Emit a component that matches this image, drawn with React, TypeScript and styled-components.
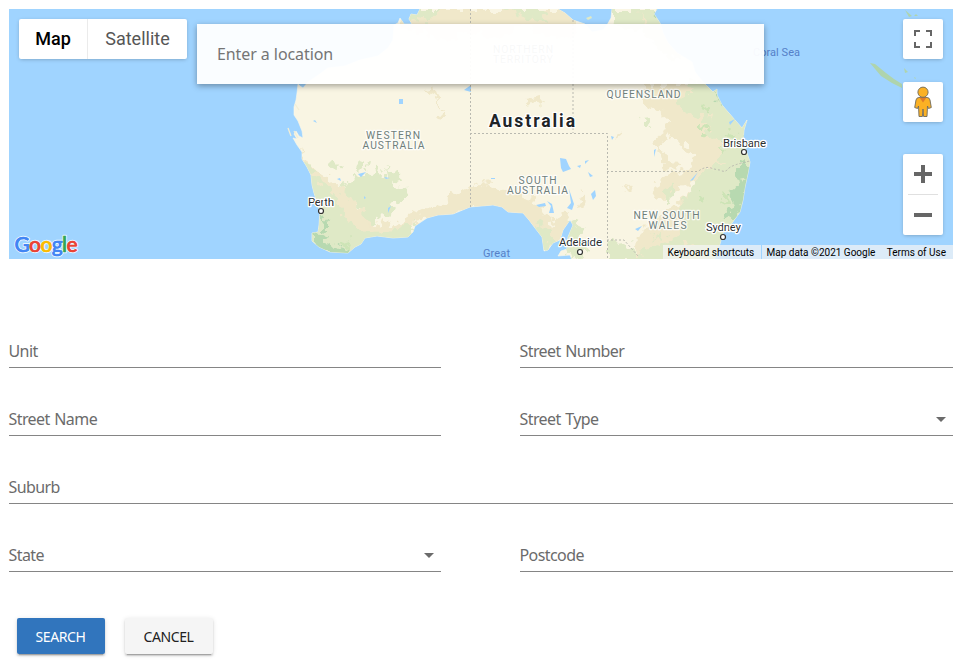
import React from "react";
import styled, { createGlobalStyle } from "styled-components";

const GlobalStyle = createGlobalStyle`
  * { box-sizing: border-box; }
  html, body { margin: 0; background: #fff; }
`;

const formFont = `"Noto Sans", "Open Sans", sans-serif`;

const Page = styled.main`
  width: 965px;
  height: 665px;
  padding: 9px 12px 0 9px;
  overflow: hidden;
  font-family: ${formFont};
`;

const MapPanel = styled.section`
  position: relative;
  height: 250px;
  overflow: hidden;
  background: #a0d4ff;
  font-family: Roboto, sans-serif;
`;

const MapCanvas = styled.svg`
  display: block;
  width: 944px;
  height: 250px;
`;

const MapTypes = styled.div`
  position: absolute;
  left: 10px;
  top: 10px;
  display: flex;
  height: 40px;
  border-radius: 2px;
  background: #fff;
  box-shadow: 0 1px 4px -1px rgba(0, 0, 0, 0.3);
`;

const MapType = styled.button<{ $active?: boolean; $width: number }>`
  width: ${(p) => p.$width}px;
  padding: 0 0 1px;
  border: 0;
  border-left: ${(p) => (p.$active ? "0" : "1px solid #ebebeb")};
  background: none;
  font: ${(p) => (p.$active ? 500 : 400)} 18px Roboto, sans-serif;
  color: ${(p) => (p.$active ? "#000" : "#565656")};
`;

const LocationInput = styled.input`
  position: absolute;
  left: 188px;
  top: 15px;
  width: 567px;
  height: 60px;
  padding: 0 20px;
  border: 0;
  outline: 0;
  background: rgba(255, 255, 255, 0.95);
  box-shadow: 0 2px 6px rgba(0, 0, 0, 0.35);
  font: 16px ${formFont};
  letter-spacing: -0.08px;
  &::placeholder { color: #757575; opacity: 1; }
`;

const Controls = styled.div`
  position: absolute;
  right: 10px;
  top: 10px;
  display: flex;
  flex-direction: column;
`;

const ControlButton = styled.button<{ $after: number }>`
  display: grid;
  place-items: center;
  width: 40px;
  height: 40px;
  margin-bottom: ${(p) => p.$after}px;
  padding: 0;
  border: 0;
  border-radius: 2px;
  background: #fff;
  box-shadow: 0 1px 4px -1px rgba(0, 0, 0, 0.3);
`;

const ZoomGroup = styled.div`
  width: 40px;
  border-radius: 2px;
  background: #fff;
  box-shadow: 0 1px 4px -1px rgba(0, 0, 0, 0.3);
`;

const ZoomButton = styled.button`
  display: grid;
  place-items: center;
  width: 40px;
  height: 40px;
  padding: 0;
  border: 0;
  background: none;
`;

const ZoomDivider = styled.div`
  height: 1px;
  margin: 0 5px;
  background: #e0e0e0;
`;

const Attribution = styled.footer`
  position: absolute;
  right: 0;
  bottom: 0;
  display: flex;
  gap: 1px;
  height: 14px;
  font-size: 10px;
  line-height: 15px;
  color: #000;
  white-space: nowrap;
`;

const Credit = styled.div<{ $width: number }>`
  display: flex;
  justify-content: space-between;
  width: ${(p) => p.$width}px;
  padding: 0 7px 0 4.500px;
  background: rgba(245, 245, 245, 0.7);
`;

const Form = styled.form`
  display: grid;
  grid-template-columns: 432px 433px;
  column-gap: 79px;
  row-gap: 32px;
  margin-top: 73px;
`;

const Field = styled.label<{ $wide?: boolean }>`
  display: flex;
  align-items: center;
  justify-content: space-between;
  grid-column: ${(p) => (p.$wide ? "1 / -1" : "auto")};
  height: 36px;
  padding-right: 7.500px;
  padding-top: 3px;
  border-bottom: 1px solid #858585;
  font-size: 16px;
  letter-spacing: -0.58px;
  word-spacing: 1px;
  text-indent: -0.5px;
  color: #6b6b6b;
`;

const Caret = styled.i`
  border: 5px solid transparent;
  border-top-color: #6b6b6b;
  border-bottom: 0;
`;

const Actions = styled.div`
  display: flex;
  gap: 20px;
  padding: 46px 8px 0;
`;

const ActionButton = styled.button<{ $primary?: boolean }>`
  width: 88px;
  height: 36px;
  padding: 0 1px 0 0;
  border: 0;
  border-radius: 2px;
  background: ${(p) => (p.$primary ? "#3175bd" : "#f5f5f5")};
  color: ${(p) => (p.$primary ? "#fff" : "#212121")};
  box-shadow: 0 3px 1px -2px rgba(0, 0, 0, 0.2), 0 2px 2px 0 rgba(0, 0, 0, 0.14),
    0 1px 5px 0 rgba(0, 0, 0, 0.12);
  font: 14px ${formFont};
  letter-spacing: -0.4px;
`;

const coast =
  "M420 9L417 15 411 14 409 19 412 24 404 24 400 18 398 23 394 25 393 40 388 48 378 56 360 60 345 66 328 68 317 76 308 82 303 88 300 86 298 84 297 93 296 100 294 107 294 115 298 121 302 131 303 138 299 136 296 131 294 134 297 139 293 138 297 145 302 152 302 159 307 167 311 175 312 185 314 193 317 202 320 212 319 225 318 232 312 233 312 241 319 247 330 252 348 253 355 247 361 244 365 238 377 236 393 238 408 237 413 232 415 226 427 218 438 215 453 214 470 207 493 205 502 207 508 212 523 213 529 220 535 228 542 237 544 251 548 250 553 243 560 240 563 230 570 220 573 225 568 237 567 249 561 251 558 256 570 255 572 260 714 260 720 244 723 233 732 223 740 212 743 200 745 187 748 173 750 162 747 153 743 142 744 130 747 120 742 128 735 120 728 112 722 105 717 95 717 89 713 92 705 84 703 82 695 72 692 62 677 53 668 43 663 33 660 23 654 14 657 9H612L611 18 607 25 603 30 592 32 585 24 573 20 565 13 558 9Z";

const sand = [
  "M406 9H575V38L540 34 520 24 500 40 470 32 440 44 420 30 400 28Z",
  "M300 150L312 168 332 180 352 198 366 218 384 226 412 222 410 240H312L306 180Z",
  "M404 226L408 216 420 210 445 204 452 196 472 186 482 182 500 190 520 193 540 205 552 224 566 214 572 236 546 252 520 222 470 210Z",
  "M642 84L720 84 730 105 745 120 750 142 750 180 700 178 690 182 675 192 662 198 650 196 664 176 690 168 694 156 682 142 672 140 668 134 658 148 652 140 664 130 668 120 656 110 642 102Z",
  "M708 164L704 182 680 200 664 214 650 224 636 238 634 260 700 260 710 220Z",
  "M422 88L434 87 438 97 431 99Z M436 94L440 96 440 108 437 106Z M441 110L446 116 445 120 440 119Z",
  "M526 98L542 95 544 102 530 106Z M617 131L624 132 618 140Z",
  "M658 144L664 154 668 161 682 162 675 170 661 166Z",
  "M624 186L632 187 630 193Z M578 208L582 192 587 194 586 206Z",
];
const green = [
  "M330 164L334 160 340 166 335 170Z M353 164L368 160 366 168 358 169Z M384 169L398 172 400 180 392 182Z M401 184L408 190 404 196 396 194Z",
  "M340 186L349 183 356 174 362 176 364 170 372 172 376 164 384 176 392 178 396 186 406 190 406 196 396 204 392 213 378 217 370 222 362 218 360 208 350 198 344 192Z",
  "M302 160L312 168 318 182 328 188 342 204 354 222 370 232 388 234 404 224 416 224 414 242H366L350 258H318L306 246 312 230 316 214Z",
  "M404 9H440L430 20 416 18 410 26Z M500 9H540L552 22 530 18Z",
  "M612 9H662L666 34 682 54 672 60 640 30 612 24Z",
  "M690 80L720 84 732 105 746 118 756 166 735 176 718 160 722 148 710 135 700 116 684 110 678 100 686 92 694 92Z",
  "M682 104L692 100 698 108 690 114 680 110Z M641 120L650 119 652 126 646 128Z",
  "M756 158L752 190 745 212 728 234 720 264H634L644 250 664 242 678 234 684 220 678 206 690 192 694 182 702 172 718 164 735 168Z",
  "M536 220L550 229 554 242 544 255 532 230Z M568 218L582 226 584 250 572 260 565 240Z",
  "M608 242L625 240 638 260H608Z M664 192L674 186 674 196 664 204Z M652 238L662 232 660 240Z",
];
const forest = [
  "M737 167L752 158 750 190 741 212 724 220 733 204 728 192 741 184 733 178Z",
  "M313 233L322 234 328 244 350 250 344 256 317 251Z M323 216L328 222 328 232 322 231Z",
  "M654 9L662 24 655 17Z M744 130L750 120 748 145Z M714 90L724 105 719 106Z",
];
const lakes =
  "M464 90L471 85 471 92Z M399 99H403V104H399Z M560 158L566 159 569 166 571 169 563 172 561 168Z M536 205L545 203 546 206 539 207Z M547 201L552 204 554 213 549 213 551 206Z M569 189L574 204 572 210 567 208 571 203Z M591 194L595 190 596 196 593 200Z M588 172L593 176 590 177Z M611 136L614 137 612 140Z M690 181L698 172 693 180Z M635 229L642 226 638 231Z M340 178L337 179 341 181Z M358 174L366 172 361 177Z M388 208L391 206 388 213Z M384 177L390 178 386 179Z M364 196L366 198 364 199Z M654 150L656 149 654 157Z M729 122L735 119 730 125Z M577 166L581 165 580 168Z M585 161L589 160 585 164Z M313 121L317 123 315 120Z M491 178H495V179H491Z";

const borders =
  "M470.500 9V207M470 133.500H607.500V260M573 20V133M607 171.500H698Q705 166 711 168T720 170Q725 173 728 169T750 161M607 240H624L638 256";

type Place = { x: number; y: number; text: string; width: number };

const regions: Place[] = [
  { x: 366, y: 138.500, text: "WESTERN", width: 54 },
  { x: 362.500, y: 148.500, text: "AUSTRALIA", width: 62 },
  { x: 518.500, y: 183.500, text: "SOUTH", width: 38 },
  { x: 507, y: 193.500, text: "AUSTRALIA", width: 61 },
  { x: 606.500, y: 97.500, text: "QUEENSLAND", width: 74 },
  { x: 633.500, y: 218.500, text: "NEW SOUTH", width: 66 },
  { x: 648.500, y: 228.500, text: "WALES", width: 38 },
  { x: 493, y: 52.500, text: "NORTHERN", width: 60 },
  { x: 493, y: 62.500, text: "TERRITORY", width: 60 },
];

const cities: (Place & { cx: number; cy: number })[] = [
  { x: 308, y: 206, text: "Perth", width: 26, cx: 321, cy: 211 },
  { x: 559, y: 246, text: "Adelaide", width: 43, cx: 580, cy: 252 },
  { x: 706, y: 231, text: "Sydney", width: 35, cx: 723, cy: 237 },
  { x: 723, y: 147, text: "Brisbane", width: 43, cx: 744, cy: 152 },
];

const halo = { stroke: "#fff", strokeWidth: 2.500, strokeLinejoin: "round", paintOrder: "stroke" } as const;

const AustraliaMap = () => (
  <MapCanvas viewBox="9 9 944 250">
    <defs>
      <clipPath id="land"><path d={coast} /></clipPath>
      <filter id="rough" x="-5%" y="-5%" width="110%" height="110%" colorInterpolationFilters="sRGB">
        <feTurbulence type="fractalNoise" baseFrequency="0.13" numOctaves="2" seed="4" />
        <feDisplacementMap in="SourceGraphic" scale="18" xChannelSelector="R" yChannelSelector="G" />
      </filter>
    </defs>
    <path d={coast} fill="#f9f5e3" stroke="#fbf8ea" strokeWidth="0.6" />
    <g clipPath="url(#land)">
      <g filter="url(#rough)">
        <path d={sand.join("")} fill="#f0e8ca" />
        <path d={green.join("")} fill="#dfe9c6" />
        <path d="M336 188L346 198 362 214 374 230 362 232 346 218 338 202Z M376 224L386 218 390 226 378 230Z M640 12L654 30 646 26Z M708 110L714 112 710 118Z M682 240L694 244 686 250Z" fill="#f0e8ca" />
        <path d="M698 192L706 196 700 203Z M728 130L738 134 732 142Z M700 126L708 130 700 134Z M720 146L730 148 722 154Z M702 106L710 110 704 112Z M722 190L730 196 724 206Z M340 244L352 240 348 250Z" fill="#cde4b6" />
        <path d={forest.join("")} fill="#b7d9b0" />
      </g>
    </g>
    <path d={lakes} fill="#a0d4ff" />
    <path d="M288 128L291 136M294 131L298 138M295 104L299 110" stroke="#f3eed5" strokeWidth="1.300" fill="none" />
    <path d="M586 18L591 16 592 18 588 20Z" fill="#dfe9c6" />
    <path d="M870 63L875 64 886 73 894 79 902 84V88L892 83 881 76Z M905 10L912 16 909 17Z M916 14L918 16H914Z M904 68L908 72 905 73Z M914 77L916 78 915 79Z" fill="#afd4ad" />
    <path d={borders} fill="none" stroke="#b9b9b0" strokeDasharray="2 2" />
    <g fontFamily="Roboto, sans-serif" fontSize="10.300" fill="#6f7f7b" {...halo} strokeOpacity="0.8">
      {regions.map((r) => (
        <text key={`${r.x}-${r.y}`} x={r.x} y={r.y} textLength={r.width}>{r.text}</text>
      ))}
    </g>
    <text x="489" y="127" textLength="86" fontFamily="Roboto, sans-serif" fontSize="17.500" fontWeight="700" fill="#202427" {...halo}>Australia</text>
    <g fontFamily="Roboto, sans-serif" fontSize="11.500" fill="#2b2f31">
      {cities.map((c) => (
        <g key={c.text}>
          <text x={c.x} y={c.y} textLength={c.width} {...halo}>{c.text}</text>
          <circle cx={c.cx} cy={c.cy} r="2.500" fill="#fff" stroke="#333" strokeWidth="1.200" />
        </g>
      ))}
    </g>
    <g fontFamily="Roboto, sans-serif" fontSize="11" fill="#5580c8">
      <text x="753" y="55.500" textLength="47">Coral Sea</text>
      <text x="483" y="256.500" textLength="27">Great</text>
    </g>
    <text x="14.500" y="251.500" textLength="63" fontFamily="Lato, sans-serif" fontSize="21" fontWeight="500" paintOrder="stroke" stroke="#fff" strokeOpacity="0.75" strokeWidth="2.500" strokeLinejoin="round">
      <tspan fill="#4285f4">G</tspan><tspan fill="#ea4335">o</tspan><tspan fill="#fbbc04">o</tspan><tspan fill="#4285f4">g</tspan><tspan fill="#34a853">l</tspan><tspan fill="#ea4335">e</tspan>
    </text>
    <text x="14.500" y="251.500" textLength="63" fontFamily="Lato, sans-serif" fontSize="21" fontWeight="500" strokeWidth="0.500" aria-hidden="true">
      <tspan fill="#4285f4" stroke="#4285f4">G</tspan><tspan fill="#ea4335" stroke="#ea4335">o</tspan><tspan fill="#fbbc04" stroke="#fbbc04">o</tspan><tspan fill="#4285f4" stroke="#4285f4">g</tspan><tspan fill="#34a853" stroke="#34a853">l</tspan><tspan fill="#ea4335" stroke="#ea4335">e</tspan>
    </text>
  </MapCanvas>
);

const FullscreenIcon = () => (
  <svg width="18" height="18" viewBox="0 0 18 18">
    <path d="M0 0v6h2V2h4V0zM16 0h-4v2h4v4h2V0zM16 16h-4v2h6v-6h-2zM2 12H0v6h6v-2H2z" fill="#666" />
  </svg>
);

const PegmanIcon = () => (
  <svg width="18" height="32" viewBox="0 0 18 32">
    <path d="M5 11.500Q2.500 11.500 2 14L.7 21.500 3.500 22.500 4.500 20 5 30.500H8.400L9 23 9.600 30.500H13L13.500 20 14.500 22.500 17.300 21.500 16 14Q15.500 11.500 13 11.500Z" fill="#fbb124" stroke="#6e6a5e" strokeWidth="0.900" />
    <path d="M5.500 11.500H12.500L9 16.500Z" fill="#e07b28" />
    <circle cx="9" cy="6.200" r="5.100" fill="#fbb124" stroke="#6e6a5e" strokeWidth="0.900" />
  </svg>
);

const ZoomIcon = ({ plus }: { plus?: boolean }) => (
  <svg width="18" height="18" viewBox="0 0 18 18">
    <path d={plus ? "M7 0h4v7h7v4h-7v7H7v-7H0V7h7z" : "M0 7h18v4H0z"} fill="#666" />
  </svg>
);

const fields = [
  { label: "Unit" },
  { label: "Street Number" },
  { label: "Street Name" },
  { label: "Street Type", select: true },
  { label: "Suburb", wide: true },
  { label: "State", select: true },
  { label: "Postcode" },
];

export default function App() {
  return (
    <Page>
      <GlobalStyle />
      <MapPanel>
        <AustraliaMap />
        <MapTypes>
          <MapType $active $width={68}>Map</MapType>
          <MapType $width={100}>Satellite</MapType>
        </MapTypes>
        <LocationInput placeholder="Enter a location" />
        <Controls>
          <ControlButton $after={23} aria-label="Fullscreen"><FullscreenIcon /></ControlButton>
          <ControlButton $after={32} aria-label="Street View"><PegmanIcon /></ControlButton>
          <ZoomGroup>
            <ZoomButton aria-label="Zoom in"><ZoomIcon plus /></ZoomButton>
            <ZoomDivider />
            <ZoomButton aria-label="Zoom out"><ZoomIcon /></ZoomButton>
          </ZoomGroup>
        </Controls>
        <Attribution>
          <Credit $width={98}>Keyboard shortcuts</Credit>
          <Credit $width={191}><span>Map data ©2021 Google</span><span>Terms of Use</span></Credit>
        </Attribution>
      </MapPanel>
      <Form>
        {fields.map((f) => (
          <Field key={f.label} $wide={f.wide}>
            {f.label}
            {f.select && <Caret />}
          </Field>
        ))}
      </Form>
      <Actions>
        <ActionButton $primary>SEARCH</ActionButton>
        <ActionButton>CANCEL</ActionButton>
      </Actions>
    </Page>
  );
}
